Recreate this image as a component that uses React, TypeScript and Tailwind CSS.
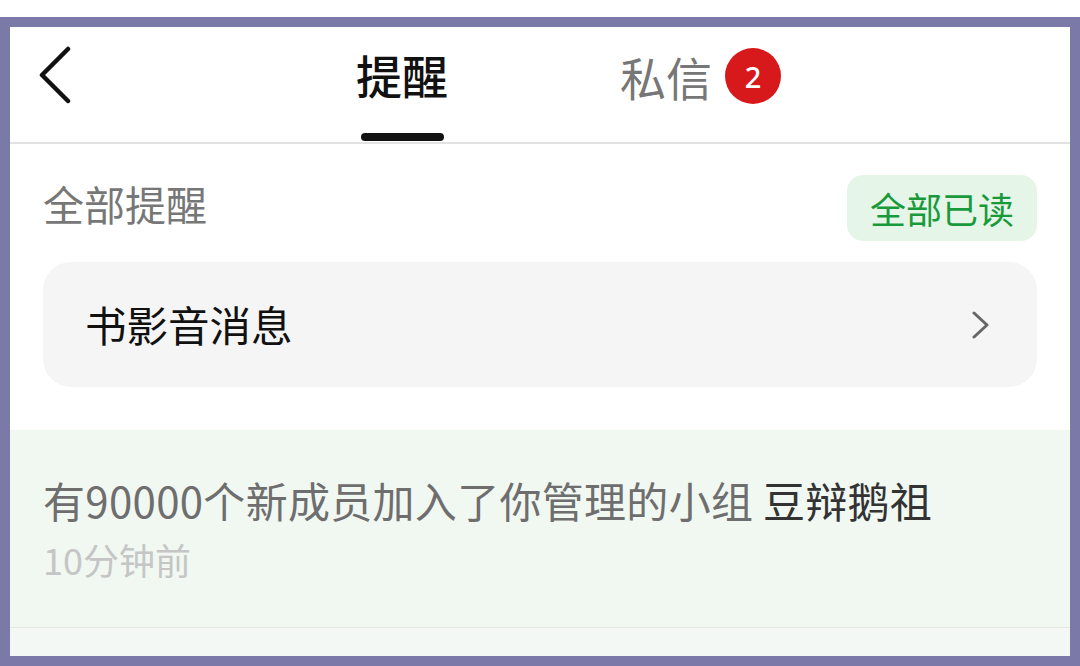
import React from "react";

export default function App() {
  return (
    <div
      className="w-[1080px] h-[666px] bg-white pt-[17px] overflow-hidden"
      style={{ fontFamily: '"Noto Sans CJK SC", "Noto Sans", sans-serif' }}
    >
      <div className="h-[649px] border-[10px] border-[#7b79a7] bg-white flex flex-col overflow-hidden">
        {/* Header */}
        <div className="h-[117px] border-b-2 border-[#e2e2e2] flex items-start shrink-0">
          <div className="pl-[29px] pt-[19px]">
            <svg width="34" height="58" viewBox="0 0 34 58" fill="none">
              <path d="M29 3 L3 29 L29 55" stroke="#111" strokeWidth="4.5" strokeLinecap="round" strokeLinejoin="round" />
            </svg>
          </div>
          <div className="ml-[283px] flex flex-col items-center pt-[21px]">
            <span className="text-[46px] leading-[52px] text-[#111] font-medium">提醒</span>
            <div className="mt-[33px] w-[83px] h-[8px] rounded-full bg-[#111]" />
          </div>
          <div className="ml-[172px] pt-[21px] flex items-center">
            <span className="text-[46px] leading-[52px] text-[#777]">私信</span>
            <div className="ml-[13px] w-[56px] h-[56px] rounded-full bg-[#d8191c] flex items-center justify-center">
              <span className="text-[29px] leading-none text-white font-medium" style={{ fontFamily: '"Noto Sans", sans-serif' }}>2</span>
            </div>
          </div>
        </div>

        {/* Section header */}
        <div className="px-[33px] pt-[31px] flex items-center justify-between">
          <span className="text-[41px] leading-none text-[#777] mb-[10px]">全部提醒</span>
          <div className="w-[190px] h-[66px] rounded-[16px] bg-[#e5f6e9] flex items-center justify-center">
            <span className="text-[36px] leading-none text-[#199a3a]">全部已读</span>
          </div>
        </div>

        {/* Card */}
        <div className="mx-[33px] mt-[21px] h-[125px] rounded-[28px] bg-[#f5f5f5] flex items-center justify-between pl-[42px] pr-[48px]">
          <span className="text-[41.5px] leading-none text-[#111]">书影音消息</span>
          <svg width="17" height="28" viewBox="0 0 17 28" fill="none">
            <path d="M2 2 L15 14 L2 26" stroke="#666" strokeWidth="3" strokeLinecap="round" strokeLinejoin="round" />
          </svg>
        </div>

        {/* Notification */}
        <div className="mt-[43px] h-[198px] bg-[#f1f8f2] border-b border-[#e2eae3] px-[33px] pt-[45px] shrink-0">
          <div className="text-[42px] leading-[50px] text-[#6e6e6e] whitespace-nowrap tracking-[0.3px]">
            有90000个新成员加入了你管理的小组 <span className="text-[#333]">豆辩鹅祖</span>
          </div>
          <div className="mt-[12px] text-[36px] leading-[44px] text-[#c5c5c5]">10分钟前</div>
        </div>
        <div className="flex-1 bg-[#f3f8f4]" />
      </div>
    </div>
  );
}
